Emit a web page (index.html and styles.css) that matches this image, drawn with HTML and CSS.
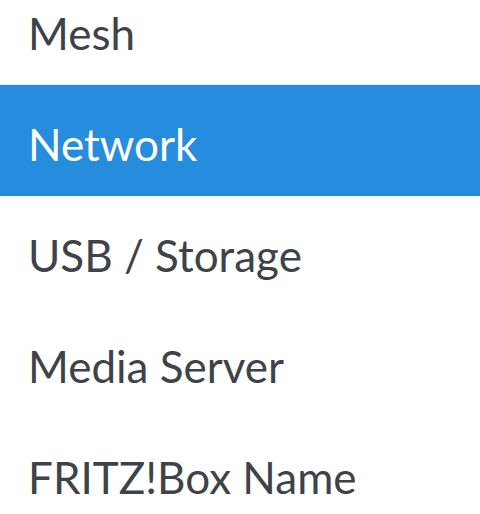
FILE: index.html
```html
<!DOCTYPE html>
<html lang="en">
<head>
    <title>Settings Menu</title>
    <link rel="stylesheet" href="styles.css">
</head>
<body>

<!-- side menu, scrolled a bit down -->
<ul id="menu">
    <li class="menu-item"><a href="#">Mesh</a></li>
    <li class="menu-item active"><a href="#">Network</a></li>
    <li class="menu-item"><a href="#">USB / Storage</a></li>
    <li class="menu-item"><a href="#">Media Server</a></li>
    <li class="menu-item"><a href="#">FRITZ!Box Name</a></li>
</ul>

</body>
</html>
```

FILE: styles.css
```css
body {
    font-family: Lato, "Open Sans", sans-serif;
    margin: 0;
    padding: 0;
    background-color: white;
    overflow: hidden;
}

#menu {
    list-style: none;
    margin: -26px 0 0 0;
    padding: 0;
}

.menu-item {
    height: 111px;
}

.menu-item a {
    display: block;
    height: 107px;
    line-height: 111px;
    padding-top: 4px;
    padding-left: 28px;
    font-size: 44px;
    color: #3d4349;
    text-decoration: none;
}

.menu-item.active {
    background-color: #268cdd;
    border-top: 1px solid #e3edf6;
    margin-top: -1px;
}

.menu-item.active a {
    color: white;
}
```
